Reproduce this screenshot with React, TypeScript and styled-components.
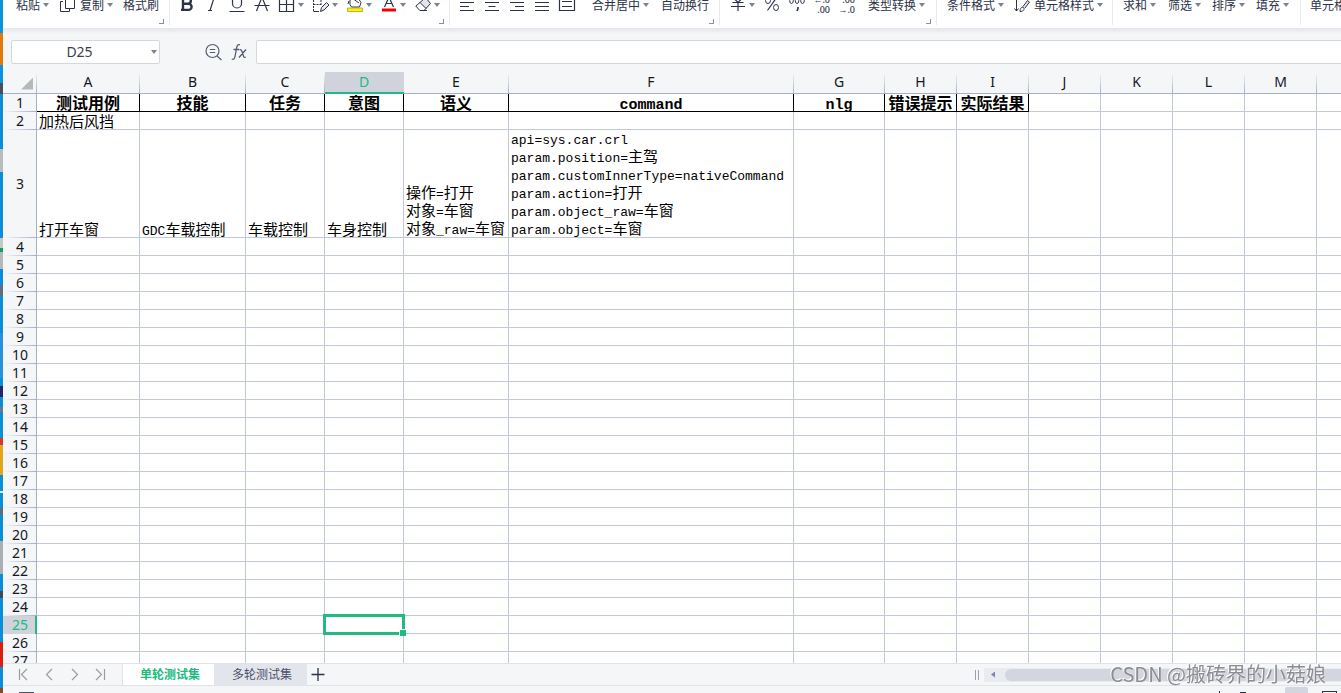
import React from 'react';
import styled, { createGlobalStyle, css } from 'styled-components';

const LATIN_UI = '"Noto Sans", "Noto Sans CJK SC", sans-serif';
const CJK_UI = '"Noto Sans CJK SC", "Noto Sans", sans-serif';
const GREEN = '#21ba80';
const INK = '#2c3348';
const GRID = '#c2c8dc';
const HEAD_LINE = '#a6b0c8';
const PANEL = '#f5f6f8';

const GlobalStyle = createGlobalStyle`
  * { box-sizing: border-box; }
  body { margin: 0; background: ${PANEL}; overflow: hidden; }
  button, input { font: inherit; color: inherit; }
`;

const Screen = styled.div`
  display: flex;
  height: 100vh;
  font-family: ${CJK_UI};
  font-size: 12px;
  color: ${INK};
`;

const Desktop = styled.div`
  flex: 0 0 3px;
  background: linear-gradient(
    #0a93d8 0 33px, #e07a0a 33px 65px, #0a93d8 65px 83px, #4a4f5e 83px 94px,
    #0a8fd6 94px 149px, #b9bcbe 149px 172px, #0a8fd6 172px 238px,
    #c4c8c8 238px 248px, #12a05c 248px 252px, #b4b8b8 252px 269px,
    #0a8fd6 269px 285px, #5d7080 285px 296px, #0a8fd6 296px 333px,
    #2a8fdd 333px 378px, #0a8fd6 378px 386px, #20286a 386px 397px,
    #0a8fd6 397px 407px, #6a7a88 407px 412px, #0a8fd6 412px 438px,
    #d23a2c 438px 445px, #dfa81c 445px 475px, #0a8fd6 475px 491px,
    #d5e4ee 491px 493px, #0a8fd6 493px 508px, #5a6f7c 508px 515px,
    #0a8fd6 515px 541px, #a8b0b4 541px 574px, #0a8fd6 574px 591px,
    #3c4c58 591px 598px, #0a8fd6 598px 642px, #d8200f 642px 667px,
    #0a8fd6 667px 688px, #8a4a20 688px
  );
`;

const Workbook = styled.main`
  flex: 1;
  min-width: 0;
  display: flex;
  flex-direction: column;
`;

/* ---------- ribbon ---------- */

const Ribbon = styled.div`
  position: relative;
  z-index: 1;
  flex: 0 0 28px;
  display: flex;
  align-items: flex-end;
  overflow: hidden;
  background: #fff;
`;

const RibbonGroup = styled.div<{ $w: number; $pad: number }>`
  position: relative;
  flex: 0 0 ${p => p.$w}px;
  height: 46px;
  padding-left: ${p => p.$pad}px;
  display: flex;
  align-items: center;
  gap: 9px;
  white-space: nowrap;
  &::after {
    content: '';
    position: absolute;
    right: 0;
    bottom: 3px;
    width: 1px;
    height: 40px;
    background: #e8e9ee;
  }
`;

const ToolButton = styled.button<{ $lead?: number }>`
  display: flex;
  align-items: center;
  gap: 3px;
  height: 24px;
  padding: 0;
  margin-left: ${p => p.$lead ?? 0}px;
  border: 0;
  background: none;
  line-height: 18px;
  svg + span { margin-left: 1px; }
`;

const Glyph = styled.svg`
  display: block;
  width: 16px;
  height: 16px;
  flex: none;
  fill: none;
  stroke: ${INK};
  overflow: visible;
`;

const Caret = styled.i`
  width: 6px;
  height: 4px;
  background: #7a8296;
  clip-path: polygon(0 0, 100% 0, 50% 100%);
`;

const Launcher = styled.button`
  position: absolute;
  right: 6px;
  bottom: 4px;
  width: 5px;
  height: 5px;
  padding: 0;
  border: solid #8a90a2;
  border-width: 0 1px 1px 0;
  background: none;
`;

const Decimal = styled.span`
  display: flex;
  flex-direction: column;
  align-items: flex-end;
  width: 16px;
  font: 500 9px/10px "Noto Sans", sans-serif;
`;

/* ---------- formula bar ---------- */

const FormulaBar = styled.div`
  flex: 0 0 44px;
  display: flex;
  align-items: center;
  padding: 4px 0 0 8px;
  background: linear-gradient(#e4e6ea, ${PANEL} 6px);
`;

const NameBox = styled.div`
  display: flex;
  align-items: center;
  width: 149px;
  height: 24px;
  border: 1px solid #d5d7dc;
  border-radius: 2px;
  background: #fff;
  input {
    flex: 1;
    min-width: 0;
    height: 22px;
    padding: 0 2px 0 0;
    border: 0;
    outline: 0;
    background: none;
    text-align: center;
    font: 14px/22px ${LATIN_UI};
    color: #3a3f4b;
  }
  button {
    display: flex;
    justify-content: center;
    padding: 0;
    width: 10px;
    border: 0;
    background: none;
  }
`;

const FormulaTools = styled.div`
  display: flex;
  align-items: center;
  gap: 10px;
  width: 96px;
  padding-left: 45px;
  button { padding: 0; border: 0; background: none; }
  svg { stroke: #555c70; }
`;

const FormulaInput = styled.input`
  flex: 1;
  min-width: 0;
  height: 24px;
  border: 1px solid #d5d7dc;
  border-right: 0;
  border-radius: 2px 0 0 2px;
  outline: 0;
  background: #fff;
`;

/* ---------- grid ---------- */

const Viewport = styled.div`
  flex: 1;
  min-height: 0;
  overflow: auto;
  scrollbar-width: none;
  background: #fff;
`;

const Sheet = styled.table`
  table-layout: fixed;
  width: 0;
  border-collapse: separate;
  border-spacing: 0;
`;

const ColHead = styled.th<{ $on?: boolean }>`
  height: 22px;
  padding: 0 1px 1px 0;
  vertical-align: top;
  border-bottom: 1px solid ${HEAD_LINE};
  font: 14px/20px ${LATIN_UI};
  color: #15181f;
  background: linear-gradient(${PANEL}, ${HEAD_LINE}) right / 1px 100% no-repeat ${PANEL};
  ${p => p.$on && css`
    padding-bottom: 0;
    color: ${GREEN};
    background: #d0d3dc;
    border-bottom: 2px solid ${GREEN};
  `}
`;

const Corner = styled.th`
  padding: 0;
  border-bottom: 1px solid ${HEAD_LINE};
  background: linear-gradient(${PANEL}, ${HEAD_LINE}) right / 1px 100% no-repeat ${PANEL};
  button {
    display: block;
    width: 12px;
    height: 12px;
    margin: 2px 4px 0 auto;
    padding: 0;
    border: 0;
    background: #b7b8ba;
    clip-path: polygon(100% 0, 100% 100%, 0 100%);
  }
`;

const RowHead = styled.th<{ $h: number; $on?: boolean }>`
  height: ${p => p.$h}px;
  padding: 0 0 0 1px;
  border-right: 1px solid ${HEAD_LINE};
  font: 14px/18px ${LATIN_UI};
  color: #15181f;
  background: linear-gradient(90deg, ${PANEL}, ${HEAD_LINE}) bottom / 100% 1px no-repeat ${PANEL};
  ${p => p.$on && css`
    padding-left: 2px;
    color: ${GREEN};
    background: #d0d3dc;
    border-right: 2px solid ${GREEN};
  `}
`;

const Cell = styled.td<{ $title?: boolean; $on?: boolean }>`
  padding: 0 0 0 2px;
  border: solid ${p => (p.$title ? '#000' : GRID)};
  border-width: 0 1px 1px 0;
  vertical-align: bottom;
  white-space: nowrap;
  overflow: hidden;
  font: 15px/17px "Noto Sans CJK SC", sans-serif;
  color: #000;
  ${p => p.$title && css`
    padding: 0;
    text-align: center;
    font-size: 16px;
    font-weight: 700;
  `}
  ${p => p.$on && css`
    position: relative;
    z-index: 1;
    overflow: visible;
  `}
`;

const Lines = styled.div`
  line-height: 18px;
  margin-top: -1px;
`;

const Mono = styled.span<{ $title?: boolean }>`
  font-family: "Liberation Mono", monospace;
  font-size: ${p => (p.$title ? 15 : 13)}px;
  line-height: 0;
`;

const Selection = styled.div`
  position: absolute;
  inset: -2px;
  border: 3px solid ${GREEN};
  &::after {
    content: '';
    position: absolute;
    right: -4px;
    bottom: -4px;
    width: 6px;
    height: 6px;
    border: solid #fff;
    border-width: 1px 0 0 1px;
    background: ${GREEN};
  }
`;

/* ---------- bottom bars ---------- */

const SheetBar = styled.div`
  position: relative;
  flex: 0 0 23px;
  display: flex;
  border: solid #e1e3e8;
  border-width: 1px 0;
  background: ${PANEL};
`;

const SheetNav = styled.nav`
  display: flex;
  align-items: center;
  gap: 10px;
  width: 120px;
  padding: 0 0 1px 12px;
  border-right: 1px solid #e1e3e8;
  button { padding: 0; border: 0; background: none; }
  svg { stroke: #9b9ca0; }
`;

const SheetTab = styled.button<{ $on?: boolean }>`
  width: ${p => (p.$on ? 91 : 93)}px;
  padding: 0 0 1px 3px;
  border: 0;
  font-size: 12px;
  line-height: 20px;
  color: ${p => (p.$on ? GREEN : '#4a5068')};
  font-weight: ${p => (p.$on ? 700 : 400)};
  background: ${p => (p.$on ? '#fff' : '#e3e5ed')};
`;

const AddSheet = styled.button`
  display: flex;
  align-items: center;
  padding: 0 3px 2px;
  border: 0;
  background: none;
`;

const ScrollArea = styled.div`
  display: flex;
  align-items: center;
  margin-left: auto;
  width: 366px;
`;

const Splitter = styled.i`
  width: 4px;
  height: 10px;
  margin-right: 5px;
  border: solid #9aa0b0;
  border-width: 0 1px;
`;

const Track = styled.div`
  flex: 1;
  display: flex;
  align-items: center;
  height: 14px;
  padding-left: 7px;
  background: #eaebf1;
`;

const ArrowLeft = styled.button`
  width: 4px;
  height: 6px;
  padding: 0;
  border: 0;
  background: #7d88a8;
  clip-path: polygon(100% 0, 100% 100%, 0 50%);
`;

const Thumb = styled.div`
  flex: 1;
  height: 12px;
  margin-left: 10px;
  border-radius: 6px 0 0 6px;
  background: #d4d6df;
`;

const Watermark = styled.div`
  position: absolute;
  right: 15px;
  top: -3px;
  font: 20px/26px "Noto Sans CJK SC", sans-serif;
  color: #8c8d91;
  text-shadow: -1px -1px 0 #fff;
  white-space: nowrap;
`;

const StatusBar = styled.footer`
  flex: 0 0 7px;
  display: flex;
  justify-content: space-between;
  padding: 0 4px 0 16px;
  overflow: hidden;
  background: ${PANEL};
`;

const StatusIcon = styled.i`
  width: 15px;
  height: 1px;
  margin-top: 6px;
  background: #4a5068;
`;

const ViewModes = styled.div`
  display: flex;
  align-items: flex-end;
  height: 7px;
`;

const ViewMode = styled.i<{ $kind: 'tick' | 'bar' | 'on' | 'page' }>`
  ${p => p.$kind === 'tick' && css`width: 1px; height: 2px; margin-right: 20px; background: ${INK};`}
  ${p => p.$kind === 'bar' && css`width: 6px; height: 1px; margin-right: 39px; background: ${INK};`}
  ${p => p.$kind === 'on' && css`width: 23px; height: 6px; margin-right: 14px; border-radius: 2px 2px 0 0; background: #d4d6df;`}
  ${p => p.$kind === 'page' && css`width: 15px; height: 2px; border: solid ${INK}; border-width: 1px 1px 0;`}
`;

/* ---------- data ---------- */

const columns: [string, number][] = [
  ['A', 103], ['B', 106], ['C', 79], ['D', 79], ['E', 105], ['F', 285], ['G', 91],
  ['H', 72], ['I', 72], ['J', 72], ['K', 72], ['L', 72], ['M', 72], ['N', 72],
];
const titles = ['测试用例', '技能', '任务', '意图', '语义', 'command', 'nlg', '错误提示', '实际结果'];
const content: Record<string, string[]> = {
  A2: ['加热后风挡'],
  A3: ['打开车窗'],
  B3: ['GDC车载控制'],
  C3: ['车载控制'],
  D3: ['车身控制'],
  E3: ['操作=打开', '对象=车窗', '对象_raw=车窗'],
  F3: [
    'api=sys.car.crl', 'param.position=主驾', 'param.customInnerType=nativeCommand',
    'param.action=打开', 'param.object_raw=车窗', 'param.object=车窗',
  ],
};
const rowCount = 27;

const Mixed = ({ text, title }: { text: string; title?: boolean }) => (
  <>
    {text.split(/([\x20-\x7e]+)/).filter(Boolean).map((part, i) =>
      /^[\x20-\x7e]/.test(part) ? <Mono key={i} $title={title}>{part}</Mono> : part)}
  </>
);

/* ---------- icons ---------- */

const icons: Record<string, React.ReactNode> = {
  copy: <><path d="M5.5 0.5h9v11h-9z" /><path d="M3 4.5H0.5v10h9V12" /></>,
  bold: <path strokeWidth="2.4" d="M4 0v13M2 1h7a2.800 2.800 0 0 1 0 5.700H4M4 6.700h5.500a3.100 3.100 0 0 1 0 6.200H2" />,
  italic: <path strokeWidth="1.2" d="M7 1h5M4 13.5h4M10 1L6 13.5" />,
  underline: <path strokeWidth="1.2" d="M3.5 0v6.5a4.5 4.5 0 0 0 9 0V0M0.5 14.5h15" />,
  strike: <path strokeWidth="1.2" d="M2.5 14L8 0l5.500 14M0.500 8.500h15" />,
  borders: <path strokeWidth="1.2" d="M0.500 0.500h14v14h-14zM7.500 0.500v14M0.500 7.500h14" />,
  cells: <><path strokeDasharray="2 1" d="M0.500 0v14M8 0v7M0.500 7.500h8M15.500 0v3" /><path d="M0.500 14.500H6M7.500 14.500l1-4 5-5 2.500 2.500-5 5z" fill="#e6e7eb" /></>,
  fill: <><path d="M3 2.500h9l2 3-1.500 4.500h-8L3 7.500zM2 4l-1 3M5 1l7 5" /><path stroke="#8a8a20" strokeWidth=".6" fill="#fff200" d="M.5 11h15v3.500H.5z" /></>,
  font: <><path strokeWidth="1.200" d="M3.500 10L8 0l4.500 10M5 6.500h6" /><path stroke="none" fill="#f00000" d="M1 11.500h14v3H1z" /></>,
  eraser: <><path fill="#e4e5ea" d="M5 5.500l5.500-5 5 6-4.500 5z" /><path d="M5 5.500L.8 9l4 4.500h4L11.500 11M7 13.500h5" /></>,
  left: <path strokeWidth="1.200" d="M1 5.500h14M1 9.500h9M1 13.500h14M1 1.500h9" />,
  center: <path strokeWidth="1.200" d="M1 5.500h14M4.500 9.500h7M1 13.500h14M4.500 1.500h7" />,
  right: <path strokeWidth="1.200" d="M1 5.500h14M6 9.500h9M1 13.500h14M6 1.500h9" />,
  justify: <path strokeWidth="1.200" d="M1 5.500h14M1 9.500h14M1 13.500h14M1 1.500h14" />,
  merge: <path strokeWidth="1.200" d="M0.500 0v14M15.500 0v14M3 4.500h10M3 9.500h10M0.500 13.500h15" />,
  yuan: <path strokeWidth="1.200" d="M2.500 0L8 5.500 13.500 0M2.500 5.500h11M1 9.500h14M8 5.500v8.500" />,
  percent: <><path strokeWidth="1.200" d="M13 0L3.500 13.500" /><ellipse cx="4" cy="3.500" rx="2.500" ry="3" /><ellipse cx="12" cy="10.500" rx="2.500" ry="3" /></>,
  thousands: <><ellipse cx="2.500" cy="3.500" rx="1.800" ry="3" /><ellipse cx="8" cy="3.500" rx="1.800" ry="3" /><ellipse cx="13.500" cy="3.500" rx="1.800" ry="3" /><path strokeWidth="1.600" d="M9 10v1.500l-1 2.500" /></>,
  style: <><path d="M2.500 0v14M0.500 11.500l2 2.500 2-2.500M6 14.500c0-3 1-4 3-4.500 2 1 1.500 4.500-3 4.500z" /><path d="M9 9.500l4.500-6 2 1.500-4.500 6" fill="#e6e7eb" /></>,
};

const Icon = ({ name }: { name: string }) => <Glyph viewBox="0 0 16 16" aria-hidden="true">{icons[name]}</Glyph>;

type ToolProps = { icon?: string; text?: string; label?: string; menu?: boolean; lead?: number };
const Tool = ({ icon, text, label, menu, lead }: ToolProps) => (
  <ToolButton $lead={lead} aria-label={label ?? text}>
    {icon && <Icon name={icon} />}
    {text && <span>{text}</span>}
    {menu && <Caret />}
  </ToolButton>
);

export default function App() {
  return (
    <Screen>
      <GlobalStyle />
      <Desktop />
      <Workbook>
        <Ribbon>
          <RibbonGroup $w={167} $pad={13}>
            <Tool text="粘贴" menu />
            <Tool icon="copy" text="复制" menu lead={2} />
            <Tool text="格式刷" lead={1} />
            <Launcher aria-label="剪贴板" />
          </RibbonGroup>
          <RibbonGroup $w={280} $pad={9}>
            <Tool icon="bold" label="加粗" />
            <Tool icon="italic" label="倾斜" />
            <Tool icon="underline" label="下划线" />
            <Tool icon="strike" label="删除线" />
            <Tool icon="borders" label="边框" menu />
            <Tool icon="cells" label="绘图边框" menu />
            <Tool icon="fill" label="填充颜色" menu />
            <Tool icon="font" label="字体颜色" menu />
            <Tool icon="eraser" label="清除" menu />
            <Launcher aria-label="字体" />
          </RibbonGroup>
          <RibbonGroup $w={270} $pad={9}>
            <Tool icon="left" label="左对齐" />
            <Tool icon="center" label="居中" />
            <Tool icon="right" label="右对齐" />
            <Tool icon="justify" label="两端对齐" />
            <Tool icon="merge" label="分散对齐" />
            <Tool text="合并居中" menu lead={8} />
            <Tool text="自动换行" lead={3} />
            <Launcher aria-label="对齐方式" />
          </RibbonGroup>
          <RibbonGroup $w={217} $pad={10}>
            <Tool icon="yuan" label="货币" menu />
            <Tool icon="percent" label="百分比" />
            <Tool icon="thousands" label="千位分隔" />
            <ToolButton aria-label="增加小数位"><Decimal><span>←.0</span><span>.00</span></Decimal></ToolButton>
            <ToolButton aria-label="减少小数位"><Decimal><span>.00</span><span>→.0</span></Decimal></ToolButton>
            <Tool text="类型转换" menu lead={4} />
            <Launcher aria-label="数字" />
          </RibbonGroup>
          <RibbonGroup $w={176} $pad={10}>
            <Tool text="条件格式" menu />
            <Tool icon="style" text="单元格样式" menu lead={1} />
          </RibbonGroup>
          <RibbonGroup $w={188} $pad={10}>
            <Tool text="求和" menu />
            <Tool text="筛选" menu lead={3} />
            <Tool text="排序" menu lead={2} />
            <Tool text="填充" menu lead={2} />
          </RibbonGroup>
          <RibbonGroup $w={80} $pad={9}>
            <Tool text="单元格" menu />
          </RibbonGroup>
        </Ribbon>

        <FormulaBar>
          <NameBox>
            <input aria-label="名称框" defaultValue="D25" />
            <button aria-label="选择名称"><Caret /></button>
          </NameBox>
          <FormulaTools>
            <button aria-label="查找">
              <Glyph viewBox="0 0 16 16">
                <circle cx="7.500" cy="7" r="6.500" strokeWidth="1.200" />
                <path strokeWidth="1.200" d="M4.800 5.500h5.400M4.800 8.500h5.400M12 12l4.500 4" />
              </Glyph>
            </button>
            <button aria-label="插入函数">
              <Glyph viewBox="0 0 16 16">
                <path strokeWidth="1.300" d="M9 .8C6.800 0 6 1.500 5.600 4L4 12.500C3.600 15 2.500 16 .8 15M2.500 5.500h5.500M8.500 5.800c1.500-.6 2 .2 2.600 2l1.300 4c.4 1.600 1.200 1.900 2.400 1.200M15 5.500L8 13.500" />
              </Glyph>
            </button>
          </FormulaTools>
          <FormulaInput aria-label="编辑栏" />
        </FormulaBar>

        <Viewport>
          <Sheet>
            <colgroup>
              <col width={34} />
              {columns.map(([name, w]) => <col key={name} width={w} />)}
            </colgroup>
            <thead>
              <tr>
                <Corner><button aria-label="全选" /></Corner>
                {columns.map(([name]) => <ColHead key={name} scope="col" $on={name === 'D'}>{name}</ColHead>)}
              </tr>
            </thead>
            <tbody>
              {Array.from({ length: rowCount }, (_, i) => i + 1).map(row => (
                <tr key={row}>
                  <RowHead scope="row" $h={row === 3 ? 108 : 18} $on={row === 25}>{row}</RowHead>
                  {columns.map(([name], c) => {
                    if (row === 1 && titles[c]) {
                      return <Cell key={name} $title><Mixed text={titles[c]} title /></Cell>;
                    }
                    const lines = content[name + row];
                    const selected = name === 'D' && row === 25;
                    return (
                      <Cell key={name} $on={selected}>
                        {selected && <Selection />}
                        {lines && lines.length === 1 && <Mixed text={lines[0]} />}
                        {lines && lines.length > 1 && (
                          <Lines>{lines.map(l => <div key={l}><Mixed text={l} /></div>)}</Lines>
                        )}
                      </Cell>
                    );
                  })}
                </tr>
              ))}
            </tbody>
          </Sheet>
        </Viewport>

        <SheetBar>
          <SheetNav aria-label="工作表">
            {['M4.500 3v11M12 3L6.500 8.500l5.500 5.500', 'M11 3L5.500 8.500l5.500 5.500', 'M5 3l5.500 5.500L5 14', 'M3 3l5.500 5.500L3 14M11.500 3v11'].map((d, i) => (
              <button key={d} aria-label={['第一张', '上一张', '下一张', '最后一张'][i]}>
                <Glyph viewBox="0 0 16 16"><path strokeWidth="1.200" d={d} /></Glyph>
              </button>
            ))}
          </SheetNav>
          <SheetTab $on>单轮测试集</SheetTab>
          <SheetTab>多轮测试集</SheetTab>
          <AddSheet aria-label="新建工作表">
            <Glyph viewBox="0 0 16 16"><path strokeWidth="1.300" d="M1.500 8.500h13M8 2v13" /></Glyph>
          </AddSheet>
          <ScrollArea>
            <Splitter />
            <Track>
              <ArrowLeft aria-label="向左滚动" />
              <Thumb />
            </Track>
          </ScrollArea>
          <Watermark>CSDN @搬砖界的小菇娘</Watermark>
        </SheetBar>

        <StatusBar>
          <StatusIcon />
          <ViewModes>
            <ViewMode $kind="tick" />
            <ViewMode $kind="bar" />
            <ViewMode $kind="on" />
            <ViewMode $kind="page" />
          </ViewModes>
        </StatusBar>
      </Workbook>
    </Screen>
  );
}
